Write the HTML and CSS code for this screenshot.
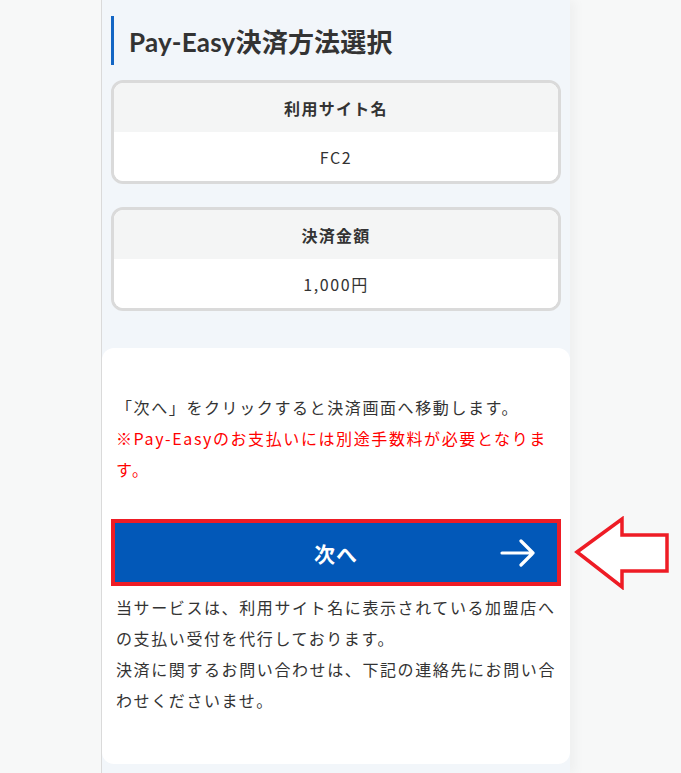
FILE: index.html
```html
<!DOCTYPE html>
<html lang="ja">
<head>
<meta charset="utf-8">
<title>Pay-Easy決済方法選択</title>
<link rel="stylesheet" href="styles.css">
</head>
<body>
<main class="page">
  <h1 class="title">Pay-Easy決済方法選択</h1>

  <section class="info-card">
    <div class="info-head">利用サイト名</div>
    <div class="info-body">FC2</div>
  </section>

  <section class="info-card">
    <div class="info-head">決済金額</div>
    <div class="info-body">1,000円</div>
  </section>

  <section class="panel">
    <p class="lead">「次へ」をクリックすると決済画面へ移動します。<br><span class="warn">※Pay-Easyのお支払いには別途手数料が必要となります。</span></p>

    <div class="btn-wrap">
      <button class="next-btn" type="button">
        <span class="btn-label">次へ</span>
        <svg class="btn-arrow" width="36" height="30" viewBox="0 0 36 30" aria-hidden="true">
          <path d="M2 15 H33 M21 3 L33 15 L21 27" fill="none" stroke="#fff" stroke-width="3.2" stroke-linecap="round" stroke-linejoin="round"/>
        </svg>
      </button>
      <svg class="callout" width="96" height="74" viewBox="0 0 96 74" aria-hidden="true">
        <polygon points="3,36 48,3 48,19 93,19 93,55 48,55 48,71" fill="#fff" stroke="#ee1c25" stroke-width="3.5" stroke-linejoin="miter"/>
      </svg>
    </div>

    <p class="note">当サービスは、利用サイト名に表示されている加盟店への支払い受付を代行しております。<br>決済に関するお問い合わせは、下記の連絡先にお問い合わせくださいませ。</p>
  </section>
</main>
</body>
</html>
```

FILE: styles.css
```css
html, body {
  margin: 0;
  padding: 0;
}

body {
  background: #f7f8f8;
  font-family: "Noto Sans CJK JP", "Noto Sans", sans-serif;
  color: #333;
  height: 773px;
  overflow: hidden;
}

.page {
  width: 469px;
  margin-left: 101px;
  min-height: 773px;
  box-sizing: border-box;
  padding: 16px 0 10px 0;
  background: #f2f6fa;
  border-left: 1px solid #dadada;
  box-shadow: 6px 0 10px rgba(0, 0, 0, 0.035);
}

.title {
  margin: 0 9px 15px 9px;
  height: 49px;
  box-sizing: border-box;
  border-left: 3px solid #1466c4;
  padding-left: 15px;
  display: flex;
  align-items: center;
  font-family: Lato, "Noto Sans CJK JP", sans-serif;
  font-weight: 700;
  font-size: 26px;
  letter-spacing: 0.2px;
  color: #333;
}

.info-card {
  margin: 0 9px 23px 9px;
  border: 3px solid #dadada;
  border-radius: 12px;
  overflow: hidden;
  background: #fff;
}

.info-head {
  height: 49px;
  display: flex;
  align-items: center;
  justify-content: center;
  background: #f4f5f5;
  font-weight: 700;
  font-size: 16px;
  letter-spacing: 1.3px;
}

.info-body {
  height: 49px;
  display: flex;
  align-items: center;
  justify-content: center;
  background: #fff;
  font-size: 16px;
  letter-spacing: 1.6px;
}

.panel {
  margin-top: 37px;
  background: #fff;
  border-radius: 12px;
  padding: 44px 13px 48px 14px;
}

.lead {
  margin: 0;
  font-size: 16px;
  line-height: 31px;
  letter-spacing: 1.6px;
  color: #333;
}

.warn {
  color: #ff0000;
}

.btn-wrap {
  position: relative;
  margin-top: 38px;
}

.next-btn {
  display: grid;
  grid-template-columns: 1fr auto 1fr;
  align-items: center;
  width: calc(100% + 1px);
  margin-left: -1px;
  height: 59px;
  padding: 0 21px 0 0;
  border: 0;
  background: #0258b8;
  outline: 4px solid #ee1c25;
  color: #fff;
  font-family: "Noto Sans CJK JP", sans-serif;
  font-weight: 700;
  font-size: 21px;
  letter-spacing: 1px;
  cursor: pointer;
}

.btn-label {
  grid-column: 2;
  padding-left: 21px;
}

.btn-arrow {
  grid-column: 3;
  justify-self: end;
}

.callout {
  position: absolute;
  left: 458px;
  top: -7px;
}

.note {
  margin: 10px 0 0 0;
  font-size: 16px;
  line-height: 31px;
  letter-spacing: 1.6px;
  color: #333;
}
```
